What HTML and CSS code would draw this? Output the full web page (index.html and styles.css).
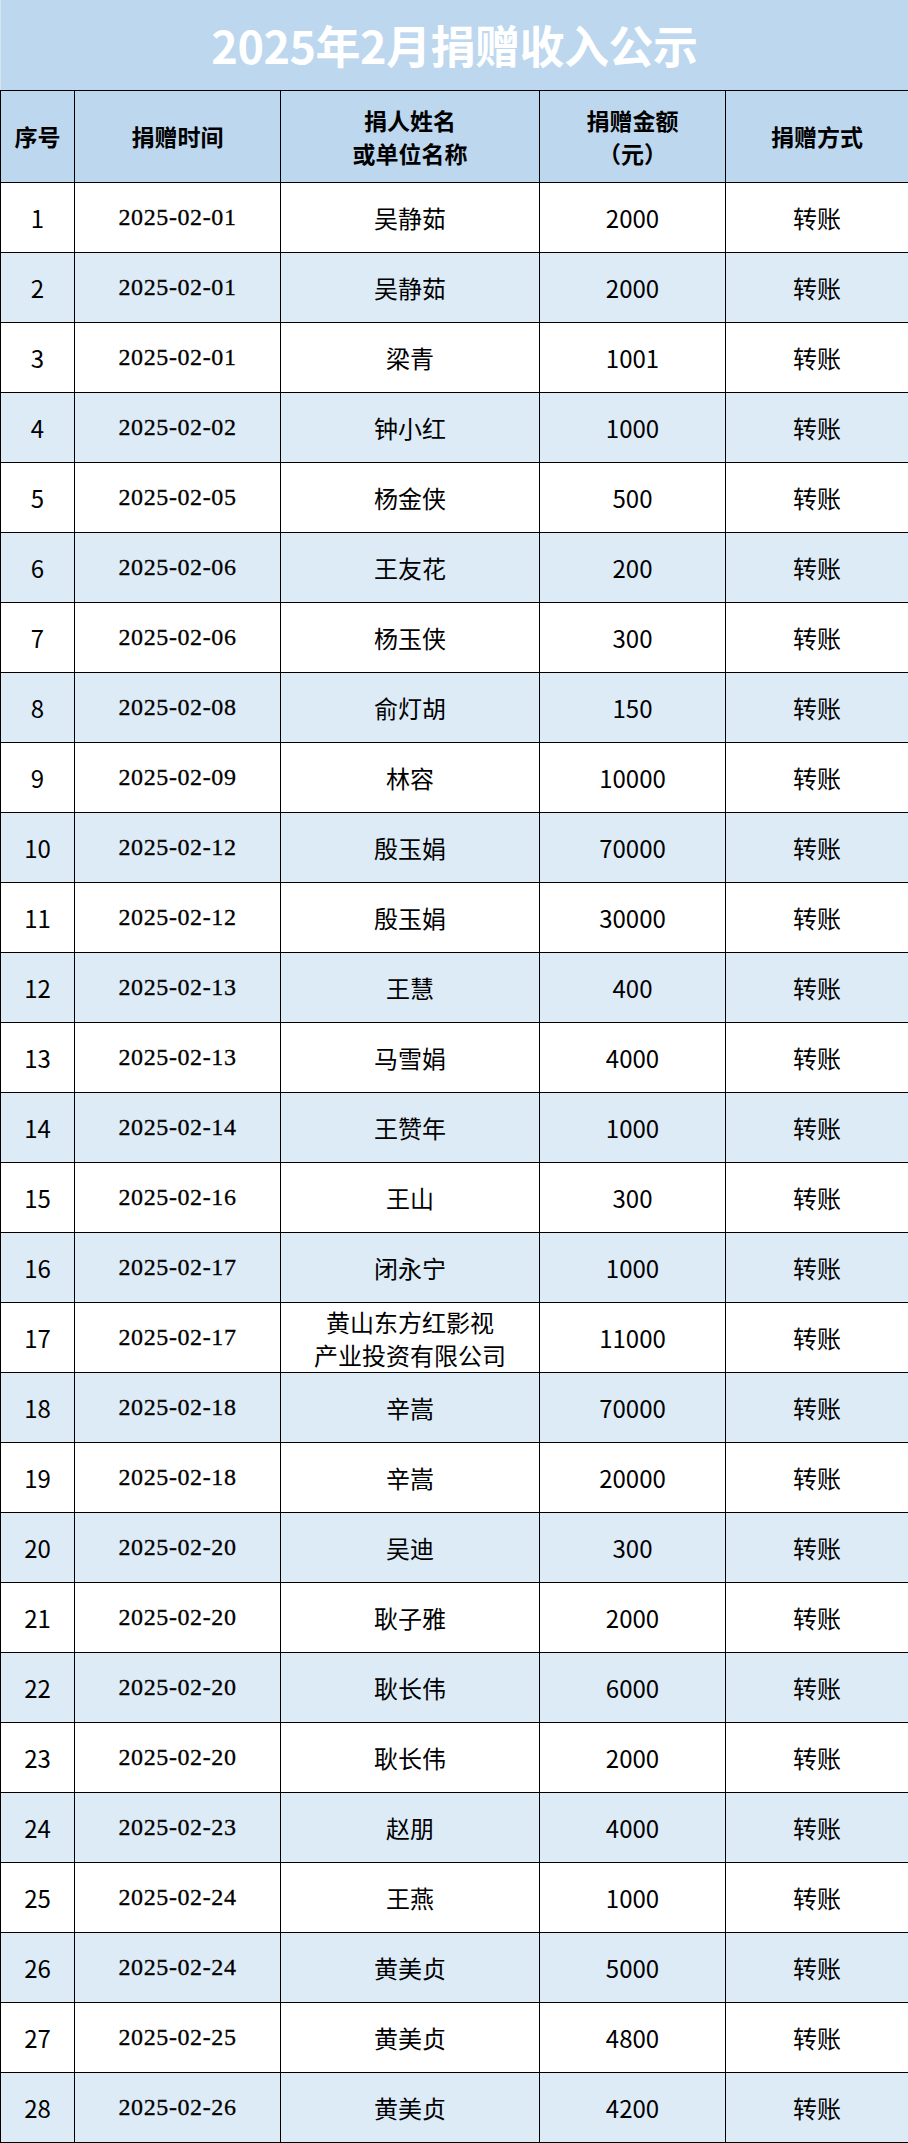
FILE: index.html
```html
<!DOCTYPE html>
<html lang="zh-CN">
<head>
<meta charset="utf-8">
<title>2025年2月捐赠收入公示</title>
<link rel="stylesheet" href="styles.css">
</head>
<body>
<div class="page">
  <div class="title">2025年2月捐赠收入公示</div>
  <table class="grid">
    <colgroup>
      <col class="c-no"><col class="c-date"><col class="c-name"><col class="c-amt"><col class="c-way">
    </colgroup>
    <thead>
      <tr class="head">
        <th>序号</th>
        <th>捐赠时间</th>
        <th>捐人姓名<br>或单位名称</th>
        <th>捐赠金额<br>（元）</th>
        <th>捐赠方式</th>
      </tr>
    </thead>
    <tbody>
      <tr><td>1</td><td class="date">2025-02-01</td><td>吴静茹</td><td>2000</td><td>转账</td></tr>
      <tr><td>2</td><td class="date">2025-02-01</td><td>吴静茹</td><td>2000</td><td>转账</td></tr>
      <tr><td>3</td><td class="date">2025-02-01</td><td>梁青</td><td>1001</td><td>转账</td></tr>
      <tr><td>4</td><td class="date">2025-02-02</td><td>钟小红</td><td>1000</td><td>转账</td></tr>
      <tr><td>5</td><td class="date">2025-02-05</td><td>杨金侠</td><td>500</td><td>转账</td></tr>
      <tr><td>6</td><td class="date">2025-02-06</td><td>王友花</td><td>200</td><td>转账</td></tr>
      <tr><td>7</td><td class="date">2025-02-06</td><td>杨玉侠</td><td>300</td><td>转账</td></tr>
      <tr><td>8</td><td class="date">2025-02-08</td><td>俞灯胡</td><td>150</td><td>转账</td></tr>
      <tr><td>9</td><td class="date">2025-02-09</td><td>林容</td><td>10000</td><td>转账</td></tr>
      <tr><td>10</td><td class="date">2025-02-12</td><td>殷玉娟</td><td>70000</td><td>转账</td></tr>
      <tr><td>11</td><td class="date">2025-02-12</td><td>殷玉娟</td><td>30000</td><td>转账</td></tr>
      <tr><td>12</td><td class="date">2025-02-13</td><td>王慧</td><td>400</td><td>转账</td></tr>
      <tr><td>13</td><td class="date">2025-02-13</td><td>马雪娟</td><td>4000</td><td>转账</td></tr>
      <tr><td>14</td><td class="date">2025-02-14</td><td>王赞年</td><td>1000</td><td>转账</td></tr>
      <tr><td>15</td><td class="date">2025-02-16</td><td>王山</td><td>300</td><td>转账</td></tr>
      <tr><td>16</td><td class="date">2025-02-17</td><td>闭永宁</td><td>1000</td><td>转账</td></tr>
      <tr><td>17</td><td class="date">2025-02-17</td><td class="two">黄山东方红影视<br>产业投资有限公司</td><td>11000</td><td>转账</td></tr>
      <tr><td>18</td><td class="date">2025-02-18</td><td>辛嵩</td><td>70000</td><td>转账</td></tr>
      <tr><td>19</td><td class="date">2025-02-18</td><td>辛嵩</td><td>20000</td><td>转账</td></tr>
      <tr><td>20</td><td class="date">2025-02-20</td><td>吴迪</td><td>300</td><td>转账</td></tr>
      <tr><td>21</td><td class="date">2025-02-20</td><td>耿子雅</td><td>2000</td><td>转账</td></tr>
      <tr><td>22</td><td class="date">2025-02-20</td><td>耿长伟</td><td>6000</td><td>转账</td></tr>
      <tr><td>23</td><td class="date">2025-02-20</td><td>耿长伟</td><td>2000</td><td>转账</td></tr>
      <tr><td>24</td><td class="date">2025-02-23</td><td>赵朋</td><td>4000</td><td>转账</td></tr>
      <tr><td>25</td><td class="date">2025-02-24</td><td>王燕</td><td>1000</td><td>转账</td></tr>
      <tr><td>26</td><td class="date">2025-02-24</td><td>黄美贞</td><td>5000</td><td>转账</td></tr>
      <tr><td>27</td><td class="date">2025-02-25</td><td>黄美贞</td><td>4800</td><td>转账</td></tr>
      <tr><td>28</td><td class="date">2025-02-26</td><td>黄美贞</td><td>4200</td><td>转账</td></tr>
    </tbody>
  </table>
</div>
</body>
</html>
```
FILE: styles.css
```css
* { box-sizing: border-box; }
html, body { margin: 0; padding: 0; background: #ffffff; }
body {
  font-family: "Noto Sans CJK SC", "Noto Sans", sans-serif;
  color: #000000;
}
.page { width: 908px; }
.title {
  height: 90px;
  background: #bdd7ee;
  border-left: 1px solid #d6e4f2;
  color: #ffffff;
  font-weight: 700;
  font-size: 45px;
  line-height: 90px;
  text-align: center;
  letter-spacing: -0.5px;
}
.grid {
  width: 908px;
  border-collapse: collapse;
  table-layout: fixed;
}
.c-no { width: 74px; }
.c-date { width: 206px; }
.c-name { width: 259px; }
.c-amt { width: 186px; }
.c-way { width: 183px; }
.grid th, .grid td {
  border: 1px solid #000000;
  text-align: center;
  vertical-align: middle;
  padding: 0;
  font-size: 24px;
  line-height: 33px;
}
.grid th {
  background: #bdd7ee;
  font-weight: 700;
  font-size: 23px;
}
.head { height: 92px; }
.grid tbody tr { height: 70px; }
.grid tbody tr:nth-child(even) td { background: #ddebf7; }
.grid td.date {
  font-family: "Liberation Serif", "Times New Roman", serif;
  font-size: 24px;
  letter-spacing: 0.6px;
  -webkit-text-stroke: 0.3px #000000;
}
```
